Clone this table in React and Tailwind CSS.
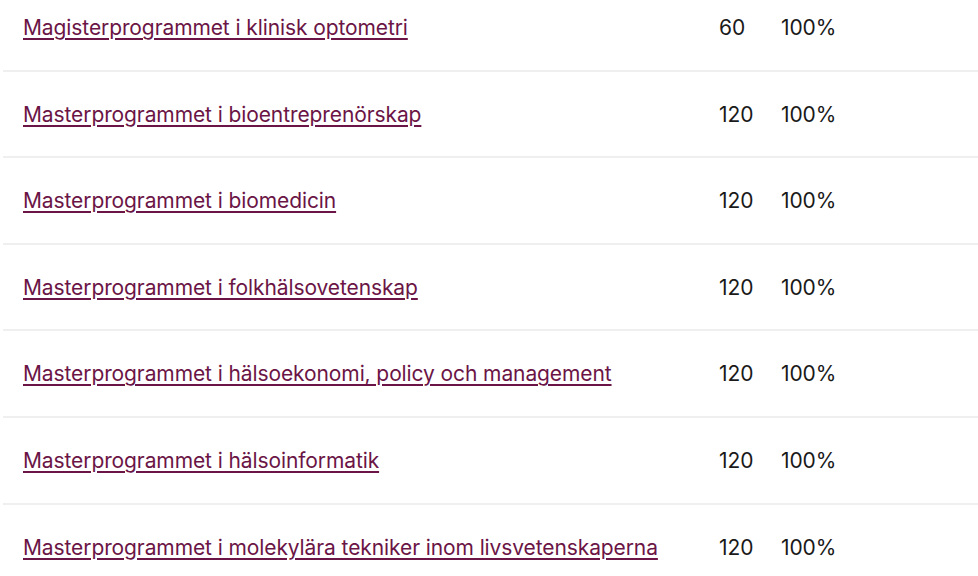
import React from "react";

const programs = [
  { name: "Magisterprogrammet i klinisk optometri", hp: "60", share: "100%" },
  { name: "Masterprogrammet i bioentreprenörskap", hp: "120", share: "100%" },
  { name: "Masterprogrammet i biomedicin", hp: "120", share: "100%" },
  { name: "Masterprogrammet i folkhälsovetenskap", hp: "120", share: "100%" },
  { name: "Masterprogrammet i hälsoekonomi, policy och management", hp: "120", share: "100%" },
  { name: "Masterprogrammet i hälsoinformatik", hp: "120", share: "100%" },
  { name: "Masterprogrammet i molekylära tekniker inom livsvetenskaperna", hp: "120", share: "100%" },
];

export default function App() {
  return (
    <div
      className="w-[978px] h-[576px] overflow-hidden bg-white text-[21px] text-[#1a1a1a] tracking-[-0.1px]"
      style={{ fontFamily: "Inter, 'Noto Sans', sans-serif" }}
    >
      <div className="ml-[3px] -mt-[15px]">
        {programs.map((p) => (
          <div
            key={p.name}
            className="flex items-center h-[86.6px] border-b-2 border-[#efefef]"
          >
            <div className="flex-1 pl-[20px] pt-[1px]">
              <a
                href="#"
                className="text-[#6b1546] underline decoration-[1.5px] underline-offset-[3px]"
              >
                {p.name}
              </a>
            </div>
            <div className="w-[62px] pt-[1px]">{p.hp}</div>
            <div className="w-[197px] pt-[1px]">{p.share}</div>
          </div>
        ))}
      </div>
    </div>
  );
}
